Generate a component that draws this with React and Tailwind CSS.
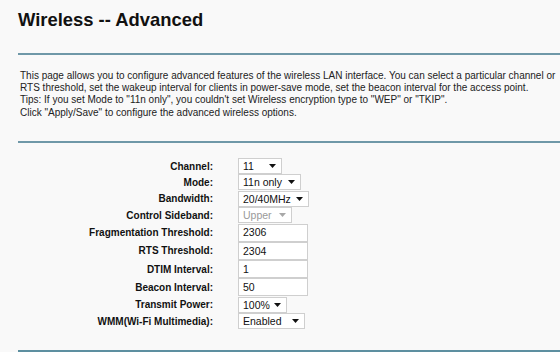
const font = { fontFamily: '"Liberation Sans", Arial, sans-serif' };

function Arrow({ disabled }) {
  return (
    <svg width="7" height="4" viewBox="0 0 7 4" className="absolute right-[5px] top-1/2 -translate-y-1/2">
      <path d="M0 0h7L3.5 4z" fill={disabled ? "#a8a8a8" : "#111"} />
    </svg>
  );
}

function Select({ value, width, disabled }) {
  return (
    <div
      className={`relative h-[16px] bg-white border border-[#cfcfcf] pl-[4px] flex items-center text-[10.5px] leading-none ${
        disabled ? "text-[#9a9a9a] bg-[#fbfbfb]" : "text-[#111]"
      }`}
      style={{ width }}
    >
      {value}
      <Arrow disabled={disabled} />
    </div>
  );
}

function Input({ value }) {
  return (
    <div className="h-[18px] w-[70px] bg-white border border-[#cfcfcf] pl-[4px] flex items-center text-[10.5px] leading-none text-[#111]">
      {value}
    </div>
  );
}

const rows = [
  { label: "Channel:", kind: "select", value: "11", width: 44 },
  { label: "Mode:", kind: "select", value: "11n only", width: 63 },
  { label: "Bandwidth:", kind: "select", value: "20/40MHz", width: 71 },
  { label: "Control Sideband:", kind: "select", value: "Upper", width: 54, disabled: true },
  { label: "Fragmentation Threshold:", kind: "input", value: "2306" },
  { label: "RTS Threshold:", kind: "input", value: "2304" },
  { label: "DTIM Interval:", kind: "input", value: "1" },
  { label: "Beacon Interval:", kind: "input", value: "50" },
  { label: "Transmit Power:", kind: "select", value: "100%", width: 49 },
  { label: "WMM(Wi-Fi Multimedia):", kind: "select", value: "Enabled", width: 67 },
];

export default function App() {
  return (
    <div className="w-[560px] h-[352px] overflow-hidden bg-[#f9f9f9] pl-[18px] pt-[9px] text-[#1a1a1a]" style={font}>
      <h1 className="text-[18.4px] leading-[21px] font-bold text-[#111]">Wireless -- Advanced</h1>
      <div className="mt-[23px] h-[2px] bg-[#6f98a8]" />

      {/* description */}
      <div className="mt-[15px] pl-[2px] text-[10px] leading-[12.2px] whitespace-nowrap text-[#222]">
        <p>This page allows you to configure advanced features of the wireless LAN interface. You can select a particular channel or</p>
        <p>RTS threshold, set the wakeup interval for clients in power-save mode, set the beacon interval for the access point.</p>
        <p>Tips: If you set Mode to "11n only", you couldn't set Wireless encryption type to "WEP" or "TKIP".</p>
        <p>Click "Apply/Save" to configure the advanced wireless options.</p>
      </div>

      <div className="mt-[22px] h-[2px] bg-[#6f98a8]" />

      {/* settings form */}
      <div className="mt-[15px] flex flex-col">
        {rows.map((r) => (
          <div
            key={r.label}
            className={`flex items-center ${r.kind === "input" ? "h-[18.3px]" : "h-[16.4px]"}`}
          >
            <div className="w-[195px] text-right text-[10px] font-bold text-[#111]">{r.label}</div>
            <div className="ml-[25px]">
              {r.kind === "input" ? (
                <Input value={r.value} />
              ) : (
                <Select value={r.value} width={r.width} disabled={r.disabled} />
              )}
            </div>
          </div>
        ))}
      </div>

      <div className="mt-[21px] h-[2px] bg-[#5d8fa0]" />
    </div>
  );
}
